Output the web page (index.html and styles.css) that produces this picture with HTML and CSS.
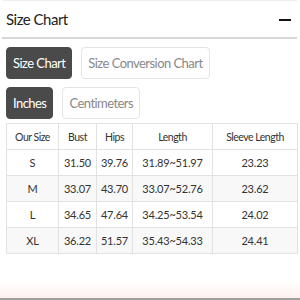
FILE: index.html
```html
<!DOCTYPE html>
<html>
<head>
<meta charset="utf-8">
<link rel="stylesheet" href="styles.css">
</head>
<body>
<div class="page">
  <div class="topline"></div>
  <div class="header">
    <span class="title">Size Chart</span>
    <span class="minus"></span>
  </div>
  <div class="btnrow first">
    <span class="btn active">Size Chart</span>
    <span class="btn">Size Conversion Chart</span>
  </div>
  <div class="btnrow second">
    <span class="btn active">Inches</span>
    <span class="btn">Centimeters</span>
  </div>
  <table class="chart">
    <colgroup>
      <col class="c1"><col class="c2"><col class="c3"><col class="c4"><col class="c5">
    </colgroup>
    <tr class="head"><td>Our Size</td><td>Bust</td><td>Hips</td><td>Length</td><td>Sleeve Length</td></tr>
    <tr><td>S</td><td>31.50</td><td>39.76</td><td>31.89~51.97</td><td>23.23</td></tr>
    <tr class="alt"><td>M</td><td>33.07</td><td>43.70</td><td>33.07~52.76</td><td>23.62</td></tr>
    <tr><td>L</td><td>34.65</td><td>47.64</td><td>34.25~53.54</td><td>24.02</td></tr>
    <tr class="alt"><td>XL</td><td>36.22</td><td>51.57</td><td>35.43~54.33</td><td>24.41</td></tr>
  </table>
  <div class="spacer"></div>
  <div class="footer"></div>
</div>
</body>
</html>
```
FILE: styles.css
```css
html, body {
  margin: 0;
  padding: 0;
  background: #fff;
}
.page {
  width: 300px;
  height: 300px;
  display: flex;
  flex-direction: column;
  font-family: Lato, "Open Sans", sans-serif;
  color: #333;
  overflow: hidden;
}
.topline {
  height: 1px;
  margin: 0 3px;
  background: #eeeeee;
}
.header {
  height: 36px;
  display: flex;
  align-items: center;
  justify-content: space-between;
  padding: 0 8px 0 4px;
  border-bottom: 2px solid #d6d6d6;
  margin: 0 3px 0 2px;
}
.title {
  font-size: 15px;
  letter-spacing: -0.5px;
  color: #222;
  margin-top: 0;
}
.minus {
  width: 12px;
  height: 2px;
  background: #111;
  margin-right: -2px;
  margin-top: 1px;
}
.btnrow {
  display: flex;
  gap: 9px;
  padding-left: 6px;
  align-items: center;
}
.btnrow.first { margin-top: 8px; }
.btnrow.second { margin-top: 8px; }
.btn {
  box-sizing: border-box;
  height: 32px;
  display: flex;
  align-items: center;
  padding: 0 6px;
  border: 1px solid #e4e4e4;
  border-radius: 4px;
  font-size: 13px;
  letter-spacing: -0.55px;
  color: #888;
  background: #fff;
}
.btn.active {
  background: #4a4a4a;
  border-color: #4a4a4a;
  color: #fff;
}
.chart {
  margin: 4px 0 0 6px;
  width: 291px;
  border-collapse: collapse;
  table-layout: fixed;
  font-size: 11px;
  letter-spacing: -0.2px;
  color: #333;
}
.c1 { width: 52px; }
.c2 { width: 38px; }
.c3 { width: 36px; }
.c4 { width: 80px; }
.c5 { width: 85px; }
.chart td {
  border: 1px solid #e2e2e2;
  height: 25px;
  padding: 0;
  text-align: center;
  white-space: nowrap;
}
.chart tr.head td {
  font-size: 10.5px;
  letter-spacing: -0.5px;
}
.chart tr.alt td {
  background: #f8f8f8;
}
.spacer { flex: 1; }
.footer {
  height: 18px;
  background: linear-gradient(to bottom, #ffffff, #fdf1ee);
  border-bottom: 2px solid #a0a0a0;
}
```
